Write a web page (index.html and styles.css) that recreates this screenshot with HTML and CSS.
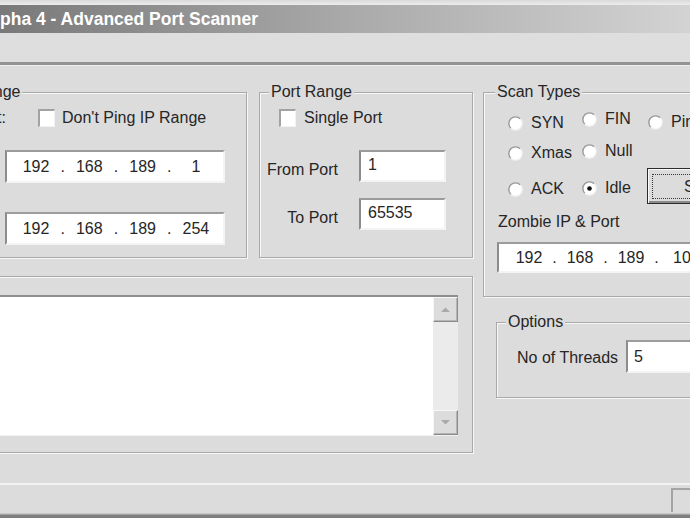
FILE: index.html
```html
<!DOCTYPE html>
<html>
<head>
<meta charset="utf-8">
<link rel="stylesheet" href="styles.css">
</head>
<body>
<div class="window">
  <div class="topstrip"></div>
  <div class="titlebar"><span class="title">pha 4 - Advanced Port Scanner</span></div>
  <div class="menubar"></div>
  <div class="sep"></div>
  <div class="client">
    <div class="col-left">
      <div class="row-top">
        <div class="group ip">
          <div class="legend">IP Range</div>
          <div class="chkrow ip-chk"><span class="cut">Start:</span><span class="chk"></span><span class="chklabel">Don't Ping IP Range</span></div>
          <div class="field ipfield ip1"><span class="oct">192</span><span class="dot">.</span><span class="oct">168</span><span class="dot">.</span><span class="oct">189</span><span class="dot">.</span><span class="oct">1</span></div>
          <div class="field ipfield ip2"><span class="oct">192</span><span class="dot">.</span><span class="oct">168</span><span class="dot">.</span><span class="oct">189</span><span class="dot">.</span><span class="oct">254</span></div>
        </div>
        <div class="group port">
          <div class="legend">Port Range</div>
          <div class="chkrow port-chk"><span class="chk"></span><span class="chklabel">Single Port</span></div>
          <div class="portrow pr1"><span class="lbl">From Port</span><div class="field portfield">1</div></div>
          <div class="portrow pr2"><span class="lbl">To Port</span><div class="field portfield">65535</div></div>
        </div>
      </div>
      <div class="group output">
        <div class="list">
          <div class="scrollbar">
            <div class="sbtn"><svg width="9" height="5" viewBox="0 0 9 5"><polygon points="0,5 4.5,0.5 9,5" fill="#a9a9a9"/></svg></div>
            <div class="track"></div>
            <div class="sbtn"><svg width="9" height="5" viewBox="0 0 9 5"><polygon points="0,0 4.5,4.5 9,0" fill="#a9a9a9"/></svg></div>
          </div>
        </div>
      </div>
    </div>
    <div class="col-right">
      <div class="group scan">
        <div class="legend">Scan Types</div>
        <div class="radios">
          <div class="rcol c1">
            <div class="radio"><svg class="rb" width="15" height="15" viewBox="0 0 15 15"><circle cx="7.5" cy="7.5" r="6.6" fill="#fff"/><path d="M12.2 2.8 A6.6 6.6 0 0 0 2.8 12.2" fill="none" stroke="#9a9a9a" stroke-width="1.4"/><path d="M2.8 12.2 A6.6 6.6 0 0 0 12.2 2.8" fill="none" stroke="#f2f2f2" stroke-width="1.4"/></svg><span>SYN</span></div>
            <div class="radio"><svg class="rb" width="15" height="15" viewBox="0 0 15 15"><circle cx="7.5" cy="7.5" r="6.6" fill="#fff"/><path d="M12.2 2.8 A6.6 6.6 0 0 0 2.8 12.2" fill="none" stroke="#9a9a9a" stroke-width="1.4"/><path d="M2.8 12.2 A6.6 6.6 0 0 0 12.2 2.8" fill="none" stroke="#f2f2f2" stroke-width="1.4"/></svg><span>Xmas</span></div>
            <div class="radio"><svg class="rb" width="15" height="15" viewBox="0 0 15 15"><circle cx="7.5" cy="7.5" r="6.6" fill="#fff"/><path d="M12.2 2.8 A6.6 6.6 0 0 0 2.8 12.2" fill="none" stroke="#9a9a9a" stroke-width="1.4"/><path d="M2.8 12.2 A6.6 6.6 0 0 0 12.2 2.8" fill="none" stroke="#f2f2f2" stroke-width="1.4"/></svg><span>ACK</span></div>
          </div>
          <div class="rcol c2">
            <div class="radio"><svg class="rb" width="15" height="15" viewBox="0 0 15 15"><circle cx="7.5" cy="7.5" r="6.6" fill="#fff"/><path d="M12.2 2.8 A6.6 6.6 0 0 0 2.8 12.2" fill="none" stroke="#9a9a9a" stroke-width="1.4"/><path d="M2.8 12.2 A6.6 6.6 0 0 0 12.2 2.8" fill="none" stroke="#f2f2f2" stroke-width="1.4"/></svg><span>FIN</span></div>
            <div class="radio"><svg class="rb" width="15" height="15" viewBox="0 0 15 15"><circle cx="7.5" cy="7.5" r="6.6" fill="#fff"/><path d="M12.2 2.8 A6.6 6.6 0 0 0 2.8 12.2" fill="none" stroke="#9a9a9a" stroke-width="1.4"/><path d="M2.8 12.2 A6.6 6.6 0 0 0 12.2 2.8" fill="none" stroke="#f2f2f2" stroke-width="1.4"/></svg><span>Null</span></div>
            <div class="radio"><svg class="rb" width="15" height="15" viewBox="0 0 15 15"><circle cx="7.5" cy="7.5" r="6.6" fill="#fff"/><path d="M12.2 2.8 A6.6 6.6 0 0 0 2.8 12.2" fill="none" stroke="#9a9a9a" stroke-width="1.4"/><path d="M2.8 12.2 A6.6 6.6 0 0 0 12.2 2.8" fill="none" stroke="#f2f2f2" stroke-width="1.4"/><circle cx="7.5" cy="7.5" r="2.3" fill="#111"/></svg><span>Idle</span></div>
          </div>
          <div class="rcol c3">
            <div class="radio"><svg class="rb" width="15" height="15" viewBox="0 0 15 15"><circle cx="7.5" cy="7.5" r="6.6" fill="#fff"/><path d="M12.2 2.8 A6.6 6.6 0 0 0 2.8 12.2" fill="none" stroke="#9a9a9a" stroke-width="1.4"/><path d="M2.8 12.2 A6.6 6.6 0 0 0 12.2 2.8" fill="none" stroke="#f2f2f2" stroke-width="1.4"/></svg><span>Ping</span></div>
            <div class="btn"><div class="focus">Scan</div></div>
          </div>
        </div>
        <div class="zlabel">Zombie IP &amp; Port</div>
        <div class="field zfield"><span class="oct">192</span><span class="dot">.</span><span class="oct">168</span><span class="dot">.</span><span class="oct">189</span><span class="dot">.</span><span class="oct">10</span></div>
      </div>
      <div class="group options">
        <div class="legend">Options</div>
        <div class="optrow"><span class="optlbl">No of Threads</span><div class="field optfield">5</div></div>
      </div>
    </div>
  </div>
  <div class="statusbar"><div class="panel"></div></div>
  <div class="frame"></div>
</div>
</body>
</html>
```

FILE: styles.css
```css
html, body {
  margin: 0;
  padding: 0;
}
body {
  width: 690px;
  height: 518px;
  overflow: hidden;
  background: #dcdcdc;
  font-family: "Liberation Sans", Arial, sans-serif;
  font-size: 16px;
  color: #262626;
}
.window {
  width: 690px;
  height: 518px;
  display: flex;
  flex-direction: column;
  overflow: hidden;
}
.topstrip {
  height: 5px;
  background: linear-gradient(#dadada, #ececec);
  flex-shrink: 0;
}
.titlebar {
  height: 28px;
  flex-shrink: 0;
  background: linear-gradient(to right, #797979, #a9a9a9 50%, #d3d3d3);
  display: flex;
  align-items: center;
  color: #fff;
  font-weight: bold;
  font-size: 17.5px;
  white-space: nowrap;
}
.menubar {
  height: 29px;
  flex-shrink: 0;
  background: #dedede;
}
.sep {
  height: 3px;
  flex-shrink: 0;
  background: #939393;
  border-bottom: 1px solid #f0f0f0;
}
.client {
  flex: 1;
  display: flex;
  padding-top: 26px;
  min-height: 0;
}
.col-left {
  flex-shrink: 0;
  width: 531px;
  margin-left: -58px;
  display: flex;
  flex-direction: column;
}
.row-top {
  display: flex;
  gap: 12px;
}
.col-right {
  flex-shrink: 0;
  width: 240px;
  margin-left: 10px;
  display: flex;
  flex-direction: column;
  align-items: flex-start;
}
.group {
  box-sizing: border-box;
  border: 1px solid #a9a9a9;
  box-shadow: inset 1px 1px 0 #f7f7f7, 1px 1px 0 #f7f7f7;
  flex-shrink: 0;
}
.legend {
  display: block;
  width: max-content;
  margin: -10px 0 0 9px;
  padding: 0 2px;
  line-height: 18px;
  background: #dcdcdc;
}
.scan .legend {
  margin-left: 11px;
}
.ip {
  width: 305px;
  height: 166px;
}
.port {
  width: 214px;
  height: 166px;
}
.chkrow {
  display: flex;
  align-items: center;
  height: 20px;
  margin-top: 7px;
  white-space: nowrap;
}
.cut {
  width: 40px;
  text-align: right;
  margin-left: 23px;
  flex-shrink: 0;
}
.chk {
  box-sizing: border-box;
  width: 17px;
  height: 18px;
  flex-shrink: 0;
  background: #fff;
  border-top: 2px solid #a2a2a2;
  border-left: 2px solid #a2a2a2;
  border-right: 1px solid #f2f2f2;
  border-bottom: 1px solid #f2f2f2;
}
.ip-chk .chk {
  margin-left: 32px;
}
.port-chk {
  padding-left: 19px;
}
.chklabel {
  margin-left: 7px;
}
.port-chk .chklabel {
  margin-left: 8px;
}
.field {
  box-sizing: border-box;
  background: #fff;
  border-style: solid;
  border-width: 2px;
  border-color: #9c9c9c #f4f4f4 #f4f4f4 #8c8c8c;
  display: flex;
  align-items: center;
  white-space: nowrap;
  flex-shrink: 0;
}
.ipfield {
  width: 220px;
  height: 33px;
  margin-left: 62px;
  padding-left: 11px;
}
.ip1 {
  margin-top: 22px;
}
.ip2 {
  margin-top: 29px;
}
.ipfield .oct {
  width: 36px;
  text-align: center;
}
.ipfield .dot {
  width: 17.3px;
  text-align: center;
}
.portrow {
  display: flex;
  align-items: center;
}
.pr1 {
  margin-top: 22px;
}
.pr2 {
  margin-top: 16px;
}
.lbl {
  width: 78px;
  text-align: right;
  margin-top: 8px;
  white-space: nowrap;
}
.portfield {
  width: 87px;
  height: 32px;
  margin-left: 21px;
  padding-left: 7px;
  padding-bottom: 3px;
}
.output {
  width: 531px;
  height: 177px;
  margin-top: 18px;
  padding: 18px 14px 0 0;
}
.list {
  box-sizing: border-box;
  height: 141px;
  background: #fff;
  border-top: 2px solid #8e8e8e;
  border-bottom: 1px solid #f2f2f2;
  display: flex;
  justify-content: flex-end;
}
.scrollbar {
  width: 25px;
  display: flex;
  flex-direction: column;
  background: #ebebeb;
}
.sbtn {
  box-sizing: border-box;
  height: 25px;
  background: #dcdcdc;
  border: 1px solid;
  border-color: #f7f7f7 #8a8a8a #8a8a8a #f7f7f7;
  box-shadow: inset -1px -1px 0 #b6b6b6;
  display: flex;
  align-items: center;
  justify-content: center;
}
.track {
  flex: 1;
}
.scan {
  width: 240px;
  height: 205px;
}
.radios {
  display: flex;
  margin-left: 24px;
  white-space: nowrap;
}
.rcol {
  display: flex;
  flex-direction: column;
  flex-shrink: 0;
}
.radio {
  display: flex;
  align-items: center;
  height: 20px;
}
.radio span {
  margin-left: 8px;
}
.rb {
  flex-shrink: 0;
}
.c1 {
  width: 74px;
  padding-top: 12px;
}
.c1 .radio:nth-child(2) {
  margin-top: 10px;
}
.c1 .radio:nth-child(3) {
  margin-top: 16px;
}
.c2 {
  width: 66px;
  padding-top: 8px;
}
.c2 .radio:nth-child(2) {
  margin-top: 12px;
}
.c2 .radio:nth-child(3) {
  margin-top: 17px;
}
.c3 {
  padding-top: 11px;
}
.btn {
  box-sizing: border-box;
  width: 100px;
  height: 36px;
  margin-top: 36px;
  margin-left: -1px;
  border: 1px solid #2c2c2c;
  background: #dcdcdc;
  box-shadow: inset 1px 1px 0 #fbfbfb, inset -2px -2px 0 #8a8a8a;
  padding: 5px 4px 4px 4px;
  display: flex;
}
.focus {
  flex: 1;
  border: 1px dotted #3a3a3a;
  display: flex;
  align-items: center;
  padding-left: 31px;
}
.zlabel {
  margin-top: 8px;
  margin-left: 14px;
  line-height: 20px;
  white-space: nowrap;
}
.zfield {
  width: 230px;
  height: 31px;
  margin-top: 10px;
  margin-left: 13px;
  padding-left: 13px;
}
.zfield .oct {
  width: 34px;
  text-align: center;
}
.zfield .dot {
  width: 17px;
  text-align: center;
}
.options {
  width: 220px;
  height: 76px;
  margin-top: 25px;
  margin-left: 13px;
}
.optrow {
  display: flex;
  align-items: center;
  margin-top: 9px;
}
.optlbl {
  margin-left: 20px;
  white-space: nowrap;
  margin-top: 3px;
}
.optfield {
  width: 100px;
  height: 33px;
  margin-left: 8px;
  padding-left: 6px;
}
.statusbar {
  box-sizing: border-box;
  height: 30px;
  flex-shrink: 0;
  border-top: 2px solid #f2f2f2;
  display: flex;
  justify-content: flex-end;
  padding-top: 3px;
}
.panel {
  box-sizing: border-box;
  width: 40px;
  height: 24px;
  margin-right: -21px;
  border-top: 2px solid #a4a4a4;
  border-left: 2px solid #a4a4a4;
}
.frame {
  height: 5px;
  flex-shrink: 0;
  background: linear-gradient(#c6c6c6 0 1px, #a4a4a4 1px 2px, #7f7f7f 2px);
}
```
